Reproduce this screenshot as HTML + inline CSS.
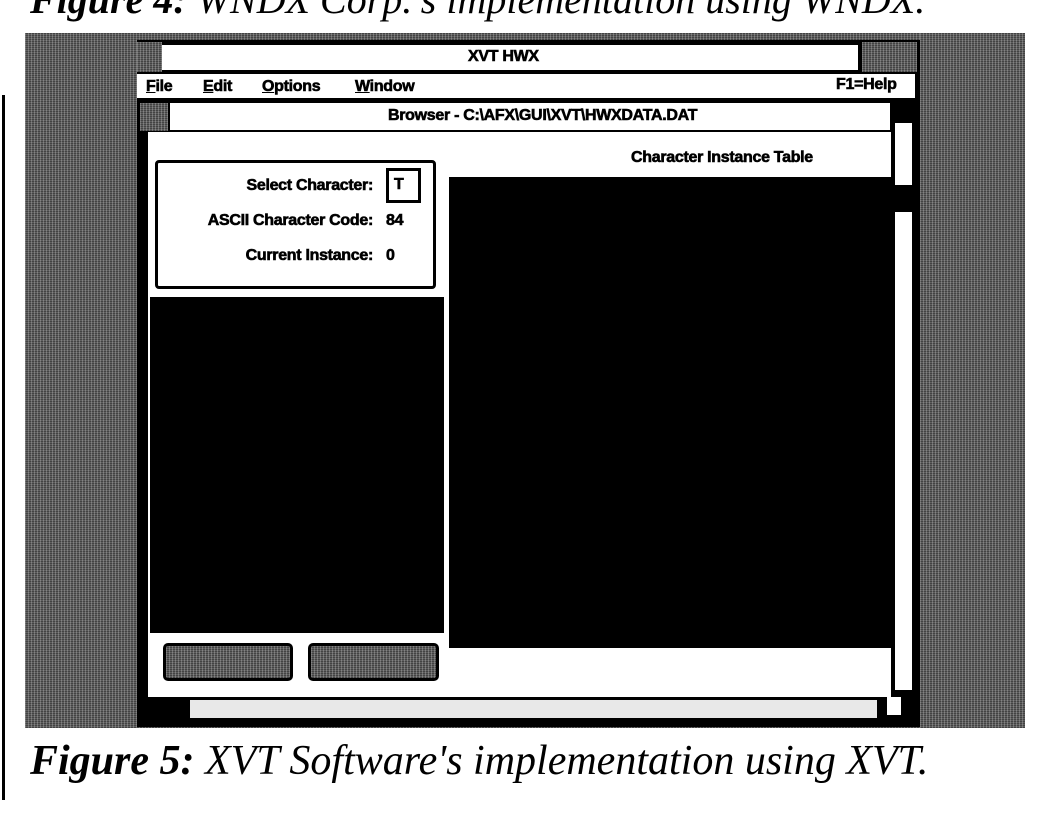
<!DOCTYPE html>
<html><head><meta charset="utf-8"><style>
*{margin:0;padding:0;box-sizing:border-box}
body{width:1040px;height:816px;background:#fff;position:relative;overflow:hidden;font-family:"Liberation Sans",sans-serif}
.a{position:absolute}
.d{background:#606060;background-image:repeating-linear-gradient(90deg,rgba(255,255,255,.22) 0 1px,transparent 1px 3px),repeating-linear-gradient(0deg,rgba(0,0,0,.3) 0 1px,transparent 1px 2px)}
.w{background:#fff}
.b{background:#000}
.t{font-weight:bold;font-size:16px;color:#000;white-space:nowrap;letter-spacing:-0.3px;-webkit-text-stroke:0.6px #000}
.r{text-align:right;width:260px}
.cap{font-family:"Liberation Serif",serif;font-style:italic;white-space:nowrap;color:#000}
</style></head><body>
<div class="a cap" style="left:30px;top:-24px;font-size:40px;"><b>Figure 4:</b> WNDX Corp.'s implementation using WNDX.</div>
<div class="a b" style="left:2px;top:95px;width:3px;height:705px"></div>

<div class="a d" style="left:25px;top:33px;width:1000px;height:695px"></div>
<div class="a b" style="left:137px;top:40px;width:783px;height:687px"></div>
<div class="a d" style="left:137px;top:42px;width:25px;height:30px"></div>
<div class="a w" style="left:162px;top:45px;width:696px;height:25px"></div>
<div class="a t" style="left:468px;top:48px">XVT HWX</div>
<div class="a d" style="left:862px;top:42px;width:55px;height:30px"></div>
<div class="a d" style="left:920px;top:33px;width:105px;height:695px"></div>

<div class="a w" style="left:137px;top:74px;width:778px;height:24px"></div>
<div class="a t" style="left:146px;top:78px"><u>F</u>ile</div>
<div class="a t" style="left:203px;top:78px"><u>E</u>dit</div>
<div class="a t" style="left:262px;top:78px"><u>O</u>ptions</div>
<div class="a t" style="left:355px;top:78px"><u>W</u>indow</div>
<div class="a t" style="left:836px;top:76px">F1=Help</div>

<div class="a d" style="left:140px;top:103px;width:28px;height:28px"></div>
<div class="a w" style="left:170px;top:103px;width:720px;height:27px"></div>
<div class="a t" style="left:388px;top:107px">Browser - C:\AFX\GUI\XVT\HWXDATA.DAT</div>

<div class="a w" style="left:148px;top:132px;width:743px;height:565px"></div>
<div class="a w" style="left:895px;top:123px;width:17px;height:62px"></div>
<div class="a w" style="left:895px;top:212px;width:17px;height:478px"></div>

<div class="a" style="left:155px;top:160px;width:281px;height:129px;border:3px solid #000;border-radius:4px"></div>
<div class="a t r" style="left:113px;top:177px">Select Character:</div>
<div class="a" style="left:386px;top:168px;width:35px;height:35px;border:3px solid #000"></div>
<div class="a t" style="left:394px;top:176px">T</div>
<div class="a t r" style="left:113px;top:212px">ASCII Character Code:</div>
<div class="a t" style="left:386px;top:212px">84</div>
<div class="a t r" style="left:113px;top:247px">Current Instance:</div>
<div class="a t" style="left:386px;top:247px">0</div>

<div class="a t" style="left:631px;top:149px">Character Instance Table</div>
<div class="a b" style="left:449px;top:177px;width:444px;height:471px"></div>
<div class="a b" style="left:150px;top:297px;width:294px;height:336px"></div>

<div class="a d" style="left:163px;top:643px;width:130px;height:38px;border:3px solid #000;border-radius:5px"></div>
<div class="a d" style="left:308px;top:643px;width:131px;height:38px;border:3px solid #000;border-radius:5px"></div>

<div class="a b" style="left:137px;top:697px;width:783px;height:28px"></div>
<div class="a" style="left:190px;top:700px;width:687px;height:18px;background:#e8e8e8"></div>
<div class="a w" style="left:887px;top:697px;width:14px;height:18px"></div>

<div class="a cap" style="left:30px;top:737px;font-size:42px;"><b>Figure 5:</b> XVT Software's implementation using XVT.</div>
</body></html>
